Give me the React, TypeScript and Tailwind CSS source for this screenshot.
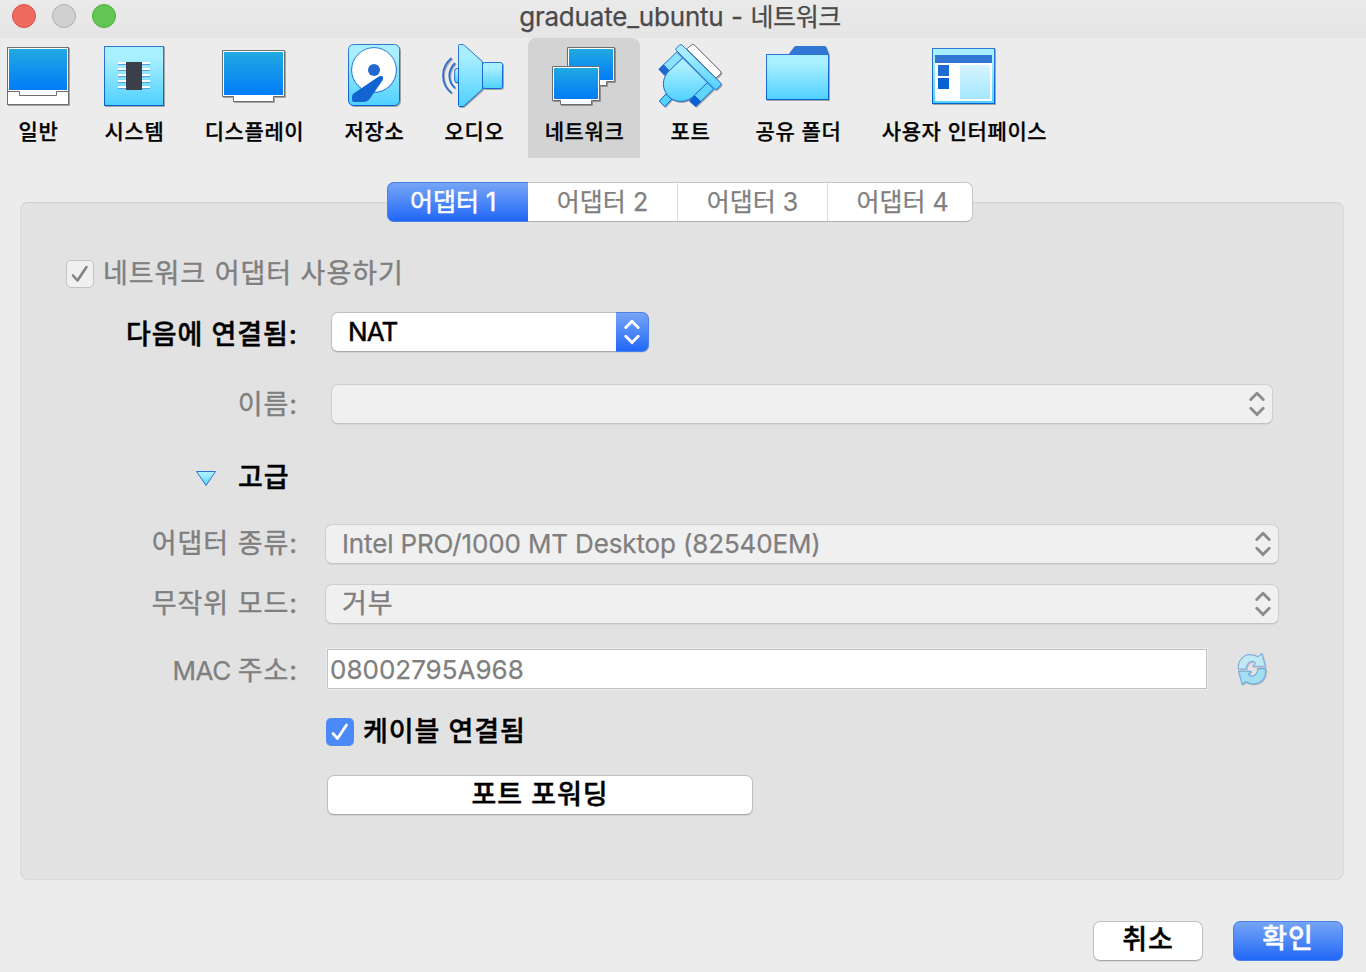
import React from 'react';

const FONT = "font-['Inter','Noto_Sans_CJK_KR',sans-serif]";

function T({ children, className = '' }: { children: React.ReactNode; className?: string }) {
  return <span className={`whitespace-pre ${className}`}>{children}</span>;
}

function Ko({ children, className = '' }: { children: React.ReactNode; className?: string }) {
  return <span className={`text-[27px] tracking-[0.95px] whitespace-pre [-webkit-text-stroke:0.4px] ${className}`}>{children}</span>;
}

function Defs() {
  return (
    <svg className="absolute size-0" aria-hidden="true">
      <defs>
        <linearGradient id="screen" x1="0" y1="0" x2="0" y2="1"><stop offset="0" stopColor="#21a9e1" /><stop offset="1" stopColor="#007cf8" /></linearGradient>
        <linearGradient id="sky" x1="0" y1="0" x2="0" y2="1"><stop offset="0.2" stopColor="#a8efff" /><stop offset="1" stopColor="#4fd0ff" /></linearGradient>
        <linearGradient id="line" gradientUnits="userSpaceOnUse" x1="0" y1="0" x2="0" y2="64"><stop offset="0" stopColor="#3579d3" /><stop offset="1" stopColor="#0060d3" /></linearGradient>
        <linearGradient id="pale" x1="0" y1="0" x2="0" y2="1"><stop offset="0" stopColor="#d5f6ff" /><stop offset="1" stopColor="#a5e6ff" /></linearGradient>
      </defs>
    </svg>
  );
}

function Icon({ children }: { children: React.ReactNode }) {
  return <svg width="64" height="64" viewBox="0 0 64 64" className="shrink-0 overflow-visible [filter:drop-shadow(1px_1px_0.3px_rgba(0,0,0,.3))]">{children}</svg>;
}

const GeneralIcon = () => (
  <Icon>
    <rect x="1.5" y="3.5" width="61" height="57" fill="#fff" stroke="#6e6e6e" />
    <rect x="3" y="5" width="58" height="41" fill="url(#screen)" />
    <path d="M1.5 47.5H13.5V51.5H50.5V47.5H62.5" fill="none" stroke="#6e6e6e" />
  </Icon>
);

const SystemIcon = () => (
  <Icon>
    <rect x="2.5" y="2.5" width="59" height="59" fill="url(#sky)" stroke="url(#line)" />
    {[18, 24, 30, 36, 42].map((y) => (
      <g key={y}><rect x="16" y={y} width="32" height="2" fill="#fff" /><rect x="16" y={y + 2} width="32" height="1" fill="#5a9fd6" /></g>
    ))}
    <rect x="24" y="18" width="16" height="28" fill="#3a3f4a" />
  </Icon>
);

const DisplayIcon = () => (
  <Icon>
    <path d="M0.5 6.5H62.5V52.5H51.5V57.5H11.5V52.5H0.5Z" fill="#fff" stroke="#6e6e6e" />
    <rect x="2" y="8" width="59" height="43" fill="url(#screen)" />
  </Icon>
);

const StorageIcon = () => (
  <Icon>
    <rect x="6.5" y="0.5" width="51" height="61" rx="5" fill="url(#sky)" stroke="url(#line)" />
    <circle cx="32" cy="26" r="22.4" fill="#fff" stroke="url(#line)" />
    <circle cx="32" cy="26" r="6" fill="#2169cf" />
    <path d="M36 33L38.2 31.9Q40 31.4 41 33Q41.4 34.5 40.6 36.2L28 54.5Q25 58 21.5 58H12Q10 58 10 56V52.5Q10 50.7 12 49.3Z" fill="#1265d1" />
  </Icon>
);

const AudioIcon = () => (
  <Icon>
    <g fill="url(#sky)" stroke="url(#line)">
      <path d="M16.5 24.5H14.5Q12.7 24.5 12.7 27V36Q12.7 38.5 14.5 38.5H16.5Z" />
      <rect x="40.5" y="18.5" width="20" height="26" rx="2" />
      <path d="M16.5 1.5Q16.5 0.5 17.5 0.5H20Q21.5 0.5 22.5 1.5L40.5 17.7V45.3L22.5 61.5Q21.5 62.5 20 62.5H17.5Q16.5 62.5 16.5 61.5Z" />
    </g>
    <path d="M13 19Q7.3 24.5 7.3 31.7T13 44M9.5 14Q1 21 1 31.5T9.5 49" fill="none" stroke="#2b72d2" strokeWidth="1.8" />
  </Icon>
);

const NetworkIcon = () => (
  <Icon>
    <path d="M15.5 3.5H62.5V37.5H54.5V41.5H22V37.5H15.5Z" fill="#fff" stroke="#6e6e6e" />
    <rect x="17" y="5" width="44" height="31" fill="url(#screen)" />
    <path d="M0.5 22.5H47.5V56.5H39.5V60.5H8.5V56.5H0.5Z" fill="#fff" stroke="#6e6e6e" />
    <rect x="2" y="24" width="44" height="31" fill="url(#screen)" />
  </Icon>
);

const PortIcon = () => (
  <Icon>
    <g transform="translate(-18 -14) scale(.33333)" strokeWidth="3" strokeLinejoin="round">
      <path d="M140 57L154 45Q159 41 164 46L241 123Q245 128 241 132L228 144Z" fill="#fff" stroke="#6e6e6e" />
      <path d="M110 66L128 84L88 123L70 105Z" fill="#8be3ff" stroke="#1f6bd0" />
      <path d="M202 158L221 177L182 215L163 196Z" fill="#5dd5ff" stroke="#1062d1" />
      <path d="M70 103L89 122L74 137L55 118Z" fill="#2169cf" />
      <path d="M163 196L183 215L167 231L147 213Z" fill="#0860d2" />
      <path d="M78 192L95 208L74 230L58 213Z" fill="#55d2ff" stroke="#0860d2" />
      <path d="M128 84L86 124C65 145 65 177 85 199C107 221 142 219 163 196L202 158Z" fill="url(#sky)" stroke="#1b68d0" />
      <path d="M108 60Q106 57 109 54L119 45Q123 42 127 46L242 159Q245 163 241 167L231 177Q227 180 223 177Z" fill="url(#sky)" stroke="#2a70d2" />
    </g>
  </Icon>
);

const FolderIcon = () => (
  <Icon>
    <path d="M22.5 10.5L28 3Q29 2 30 2H58.5Q59.7 2 60.2 3L63 10.5Z" fill="#3176d3" />
    <rect x="0.5" y="10.5" width="62" height="45" fill="url(#sky)" stroke="url(#line)" />
  </Icon>
);

const InterfaceIcon = () => (
  <Icon>
    <rect x="0.5" y="4.5" width="62" height="55" fill="url(#sky)" stroke="url(#line)" />
    <rect x="3" y="11" width="57" height="8" fill="#3176d3" />
    <rect x="3" y="19" width="57" height="38" fill="#fff" />
    <rect x="6" y="21" width="11" height="11" fill="#1f6bd3" />
    <rect x="6" y="34" width="11" height="11" fill="#0762d4" />
    <rect x="28" y="21" width="30" height="34" fill="url(#pale)" />
  </Icon>
);

const TOOLS = [
  { label: '일반', icon: GeneralIcon, box: 'w-[76px]' },
  { label: '시스템', icon: SystemIcon, box: 'ml-[12px] w-[92px]' },
  { label: '디스플레이', icon: DisplayIcon, box: 'ml-[7px] w-[134px]' },
  { label: '저장소', icon: StorageIcon, box: 'ml-[6px] w-[94px]' },
  { label: '오디오', icon: AudioIcon, box: 'ml-[6px] w-[94px]' },
  { label: '네트워크', icon: NetworkIcon, box: 'ml-[7px] w-[112px] rounded-t-lg bg-[#d3d3d3]' },
  { label: '포트', icon: PortIcon, box: 'ml-[12px] w-[76px]' },
  { label: '공유 폴더', icon: FolderIcon, box: 'ml-[10px] w-[120px]' },
  { label: '사용자 인터페이스', icon: InterfaceIcon, box: 'ml-[7px] w-[198px]' },
];

function Toolbar() {
  return (
    <nav className="flex h-[120px]">
      {TOOLS.map(({ label, icon: Glyph, box }) => (
        <button key={label} className={`flex shrink-0 flex-col items-center pt-[6px] ${box}`}>
          <Glyph />
          <T className="mt-[10px] pl-px text-[21px] leading-[28px] font-medium tracking-[0.6px] text-black">{label}</T>
        </button>
      ))}
    </nav>
  );
}

function Chevrons({ className }: { className: string }) {
  return (
    <svg width="16" height="26" viewBox="0 0 16 26" fill="none" strokeWidth="2.9" strokeLinecap="round" strokeLinejoin="round" className={className}>
      <path d="M1.8 8.5L8 2.2L14.2 8.5M1.8 17.3L8 23.6L14.2 17.3" />
    </svg>
  );
}

function DisabledSelect({ children, className }: { children?: React.ReactNode; className: string }) {
  return (
    <div className={`flex h-10 items-center rounded-[7px] border border-[#cfcfcf] border-b-[#c2c2c2] bg-[#f0f0f0] pr-[7.5px] pl-4 shadow-[0_1px_1px_rgba(0,0,0,.06)] ${className}`}>
      <div className="flex-1 text-[26px] leading-8 text-[#7f7f7f]">{children}</div>
      <Chevrons className="stroke-[#8c8c8c]" />
    </div>
  );
}

function Label({ children, className = 'text-[#7f7f7f]' }: { children: React.ReactNode; className?: string }) {
  return <div className={`w-[277px] shrink-0 text-right text-[26px] leading-8 whitespace-nowrap ${className}`}>{children}</div>;
}

const Refresh = () => (
  <svg width="32" height="34" viewBox="0 0 32 34" className="ml-[30px] overflow-visible [filter:drop-shadow(1px_1px_0.4px_rgba(0,0,0,.15))]" strokeWidth="1.1" strokeLinejoin="round">
    <path d="M1.3 17C1 11 3.5 6.5 7.5 4Q14 0.8 21 4.8L24.8 1.5L28.3 14.3H15.5L18.6 11.3L16.8 9.6C12.5 8.6 9.2 12 9.2 17Z" fill="#c0e9f4" stroke="#84aee0" />
    <path d="M28.6 16.6C29.2 24 26 28.8 22 30.8Q15 33.5 8.8 29.8L5.2 32.5L1.5 19.2H14.2L11.4 22.2L13.2 24C17.3 24.8 20.8 21.8 21 16.6Z" fill="#a4def3" stroke="#6ba9e0" />
  </svg>
);

export default function App() {
  return (
    <div className={`flex h-[972px] w-[1366px] flex-col overflow-hidden bg-[#ececec] text-black [-webkit-text-stroke:0.25px] ${FONT}`}>
      <Defs />
      <header className="flex h-[38px] shrink-0 items-start bg-linear-to-b from-[#eaeaea] to-[#e5e5e5]">
        <div className="flex w-[130px] gap-4 pt-[4px] pl-3">
          <span className="size-6 rounded-full border border-[#dd5248] bg-[#ed6b5f]" />
          <span className="size-6 rounded-full border border-[#b0b0b0] bg-[#d0d0d0]" />
          <span className="size-6 rounded-full border border-[#4fae3c] bg-[#62c654]" />
        </div>
        <h1 className="w-[1100px] text-center text-[26px] leading-[34px] text-[#4a4a4a]">
          <T className="tracking-[-0.2px]">graduate_ubuntu</T><T className="tracking-[0.1px]"> - </T><T className="text-[25px] tracking-[-0.4px]">네트워크</T>
        </h1>
      </header>
      <Toolbar />
      <main className="mr-[22px] ml-5 mt-6 flex flex-col">
        <div className="z-10 ml-[367px] flex h-10 w-[586px] shrink-0 rounded-[7px] border border-[#c6c6c6] border-b-[#b0b0b0] bg-white text-[25px] leading-[39px] text-[#7f7f7f]">
          <div className="-my-px -ml-px w-[141px] rounded-l-[7px] border border-r-0 border-[#4a80ea] bg-linear-to-b from-[#76a4f5] to-[#1f66f8] pr-[10px] text-center leading-[39px] text-white [-webkit-text-stroke:0.5px]"><T>어댑터 1</T></div>
          <div className="w-[150px] border-r border-[#dcdcdc] text-center"><T>어댑터 2</T></div>
          <div className="w-[150px] border-r border-[#dcdcdc] text-center"><T>어댑터 3</T></div>
          <div className="flex-1 pl-[5px] text-center"><T>어댑터 4</T></div>
        </div>
        <section className="-mt-5 flex h-[678px] flex-col rounded-lg border border-[#d9d9d9] border-t-[#d0d0d0] bg-[#e2e2e2] pt-[57px]">
          <div className="flex h-7 items-center pl-[45px]">
            <span className="flex size-7 items-center justify-center rounded-[5px] border border-[#c3c3c3] bg-[#f0f0f0]">
              <svg width="18" height="18" viewBox="0 0 18 18" fill="none" stroke="#848484" strokeWidth="2.6" strokeLinecap="round" strokeLinejoin="round"><path d="M2 10.5L6.5 15.5L15.5 2" /></svg>
            </span>
            <Ko className="ml-[9px] leading-8 text-[#7f7f7f]">네트워크 어댑터 사용하기</Ko>
          </div>
          <div className="mt-6 flex h-10 items-center">
            <Label className="pt-[5px] font-medium text-black"><Ko>다음에 연결됨:</Ko></Label>
            <div className="ml-[33px] flex h-10 w-[318px] rounded-[7px] border border-[#c0c0c0] border-b-[#a8a8a8] bg-white pl-4 shadow-[0_1px_1px_rgba(0,0,0,.08)]">
              <span className="flex-1 text-[26px] leading-[38px] [-webkit-text-stroke:0.5px]"><T className="tracking-[-0.9px]">NAT</T></span>
              <span className="-m-px flex w-[33px] items-center justify-center rounded-r-[7px] border border-l-0 border-[#4a80ea] bg-linear-to-b from-[#76a4f5] to-[#1f66f8]"><Chevrons className="stroke-white" /></span>
            </div>
          </div>
          <div className="mt-8 flex h-10 items-center"><Label className="pt-[2px] text-[#7f7f7f]"><Ko>이름:</Ko></Label><DisabledSelect className="ml-[33px] w-[942px]" /></div>
          <div className="mt-[34px] flex h-10 items-center pl-[174px]">
            <svg width="22" height="17" viewBox="0 0 22 17"><path d="M1.5 1.5H20.5L11 15.5Z" fill="url(#sky)" stroke="#2a74d3" strokeLinejoin="round" /></svg>
            <Ko className="ml-[21px] leading-8 font-medium">고급</Ko>
          </div>
          <div className="mt-[26px] flex h-10 items-center"><Label><Ko>어댑터 종류:</Ko></Label><DisabledSelect className="ml-[27px] w-[954px]"><T className="tracking-[-0.14px]">Intel PRO/1000 MT Desktop (82540EM)</T></DisabledSelect></div>
          <div className="mt-5 flex h-10 items-center"><Label><Ko>무작위 모드:</Ko></Label><DisabledSelect className="ml-[27px] w-[954px]"><Ko>거부</Ko></DisabledSelect></div>
          <div className="mt-[25px] flex h-10 items-center">
            <Label className="pt-[3px] text-[#7f7f7f]"><T className="tracking-[-0.4px]">MAC </T><Ko>주소:</Ko></Label>
            <div className="ml-[29px] h-10 w-[880px] border border-[#c3c3c3] bg-white pl-[2px] text-[26px] leading-[40px] text-[#7f7f7f] shadow-[0_0_0_1px_#ebebeb]"><T>08002795A968</T></div>
            <Refresh />
          </div>
          <div className="mt-[29px] flex h-7 items-center pl-[305px]">
            <span className="flex size-7 items-center justify-center rounded-[5px] bg-[#4a89f7]">
              <svg width="18" height="18" viewBox="0 0 18 18" fill="none" stroke="#fff" strokeWidth="2.8" strokeLinecap="round" strokeLinejoin="round"><path d="M2 10.5L6.5 15.5L15.5 2" /></svg>
            </span>
            <Ko className="ml-[9px] leading-8 font-medium">케이블 연결됨</Ko>
          </div>
          <button className="mt-[29px] ml-[306px] h-10 w-[426px] rounded-[7px] border border-[#c0c0c0] border-b-[#a8a8a8] bg-white pb-px text-center text-[26px] leading-[36px] font-medium shadow-[0_1px_1px_rgba(0,0,0,.08)]"><Ko>포트 포워딩</Ko></button>
        </section>
      </main>
      <footer className="mt-[41px] flex justify-end gap-[30px] pr-[23px] text-[26px] leading-8 font-medium">
        <button className="h-10 w-[110px] rounded-[7px] border border-[#c0c0c0] border-b-[#a8a8a8] bg-white pb-[3px] shadow-[0_1px_1px_rgba(0,0,0,.08)]"><Ko>취소</Ko></button>
        <button className="h-10 w-[110px] rounded-[7px] border border-[#4a80ea] bg-linear-to-b from-[#76a4f5] to-[#1f66f8] pb-[5px] text-white"><Ko>확인</Ko></button>
      </footer>
    </div>
  );
}
